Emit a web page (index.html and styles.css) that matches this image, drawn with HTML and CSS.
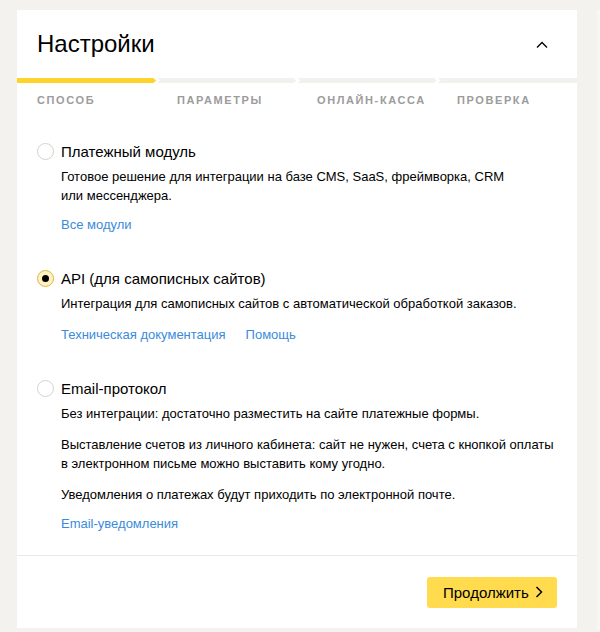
FILE: index.html
```html
<!DOCTYPE html>
<html lang="ru">
<head>
<meta charset="utf-8">
<title>Настройки</title>
<link rel="stylesheet" href="styles.css">
</head>
<body>
<div class="page">
  <section class="card">
    <header class="card-header">
      <h1 class="card-title">Настройки</h1>
      <button class="collapse" aria-label="Свернуть">
        <svg width="12" height="7" viewBox="0 0 12 7"><path d="M1 6.5 L6 1.5 L11 6.5" fill="none" stroke="#000" stroke-width="1.3"/></svg>
      </button>
    </header>
    <div class="steps">
      <div class="step-bars">
        <span class="bar bar-first bar-active"></span>
        <span class="bar"></span>
        <span class="bar"></span>
        <span class="bar bar-last"></span>
      </div>
      <div class="step-labels">
        <span class="step-label">Способ</span>
        <span class="step-label">Параметры</span>
        <span class="step-label">Онлайн-касса</span>
        <span class="step-label">Проверка</span>
      </div>
    </div>
    <div class="options">
      <div class="option">
        <span class="radio"></span>
        <div class="option-body">
          <div class="option-title">Платежный модуль</div>
          <p class="option-text">Готовое решение для интеграции на базе CMS, SaaS, фреймворка, CRM<br>или мессенджера.</p>
          <div class="option-links"><a href="#" class="link">Все модули</a></div>
        </div>
      </div>
      <div class="option">
        <span class="radio radio-checked"></span>
        <div class="option-body">
          <div class="option-title">API (для самописных сайтов)</div>
          <p class="option-text">Интеграция для самописных сайтов с автоматической обработкой заказов.</p>
          <div class="option-links option-links-wide"><a href="#" class="link">Техническая документация</a><a href="#" class="link">Помощь</a></div>
        </div>
      </div>
      <div class="option">
        <span class="radio"></span>
        <div class="option-body">
          <div class="option-title">Email-протокол</div>
          <p class="option-text">Без интеграции: достаточно разместить на сайте платежные формы.</p>
          <p class="option-text option-para">Выставление счетов из личного кабинета: сайт не нужен, счета с кнопкой оплаты<br>в электронном письме можно выставить кому угодно.</p>
          <p class="option-text option-para">Уведомления о платежах будут приходить по электронной почте.</p>
          <div class="option-links"><a href="#" class="link">Email-уведомления</a></div>
        </div>
      </div>
    </div>
    <footer class="card-footer">
      <button class="btn-next">Продолжить
        <svg width="8" height="12" viewBox="0 0 8 12"><path d="M1.5 1 L6.5 6 L1.5 11" fill="none" stroke="#000" stroke-width="1.5"/></svg>
      </button>
    </footer>
  </section>
  <div class="side"></div>
</div>
</body>
</html>
```
FILE: styles.css
```css
* { box-sizing: border-box; }
html, body { margin: 0; padding: 0; }
body {
  background: #f3f2ef;
  font-family: "Liberation Sans", Arial, sans-serif;
  color: #000;
  overflow: hidden;
}
.page {
  display: flex;
  padding: 10px 0 0 17px;
  gap: 20px;
  width: 600px;
}
.card {
  width: 560px;
  flex: none;
  background: #fff;
  height: 618px;
  display: flex;
  flex-direction: column;
}
.side {
  flex: 1;
  height: 620px;
  background: #f7f6f4;
}
.card-header {
  height: 68px;
  display: flex;
  align-items: center;
  justify-content: space-between;
  padding: 0 28px 0 20px;
}
.card-title {
  margin: 0;
  font-size: 24px;
  font-weight: normal;
  line-height: 28px;
}
.collapse {
  border: 0;
  background: none;
  padding: 0;
  width: 14px;
  height: 14px;
  display: flex;
  align-items: center;
  justify-content: center;
  margin-top: 1px;
}
.step-bars {
  display: flex;
  gap: 1px;
  height: 5px;
}
.bar {
  flex: 1;
  background: #f2f1ee;
  clip-path: polygon(0 0, calc(100% - 3px) 0, 100% 50%, calc(100% - 3px) 100%, 0 100%, 3px 50%);
}
.bar-first { clip-path: polygon(0 0, calc(100% - 3px) 0, 100% 50%, calc(100% - 3px) 100%, 0 100%); }
.bar-last { clip-path: polygon(0 0, 100% 0, 100% 100%, 0 100%, 3px 50%); }
.bar-active { background: #fed42b; }
.step-labels {
  display: flex;
  margin-top: 10px;
}
.step-label {
  flex: 1;
  padding-left: 20px;
  font-size: 11px;
  line-height: 14px;
  letter-spacing: 1.6px;
  text-transform: uppercase;
  color: #9c9c9c;
  font-weight: bold;
}
.options {
  padding: 35px 20px 22px;
  display: flex;
  flex-direction: column;
  gap: 35px;
  border-bottom: 1px solid #e8e8e6;
}
.option {
  display: flex;
}
.radio {
  flex: none;
  width: 17px;
  height: 17px;
  border: 1px solid #d2d2d0;
  border-radius: 50%;
  margin: 1px 7px 0 0;
  background: #fff;
  display: flex;
  align-items: center;
  justify-content: center;
}
.radio-checked {
  border-color: #d9b64a;
  background: #fff1c2;
}
.radio-checked::after {
  content: "";
  width: 7px;
  height: 7px;
  border-radius: 50%;
  background: #000;
}
.option-title {
  font-size: 15px;
  line-height: 20px;
}
.option-text {
  margin: 5px 0 0;
  font-size: 13px;
  line-height: 19px;
}
.option-para { margin-top: 12px; }
.option-links {
  margin-top: 10px;
  display: flex;
  gap: 20px;
  font-size: 13px;
  line-height: 19px;
}
.option-links-wide { margin-top: 12px; }
.link {
  color: #3a8bdb;
  text-decoration: none;
}
.card-footer {
  flex: 1;
  display: flex;
  align-items: center;
  justify-content: flex-end;
  padding: 0 20px;
}
.btn-next {
  border: 0;
  border-radius: 3px;
  background: #ffdb4d;
  height: 31px;
  width: 130px;
  padding: 0 14px 0 16px;
  display: flex;
  align-items: center;
  justify-content: space-between;
  font-family: "Liberation Sans", Arial, sans-serif;
  font-size: 15px;
  color: #000;
}
```
